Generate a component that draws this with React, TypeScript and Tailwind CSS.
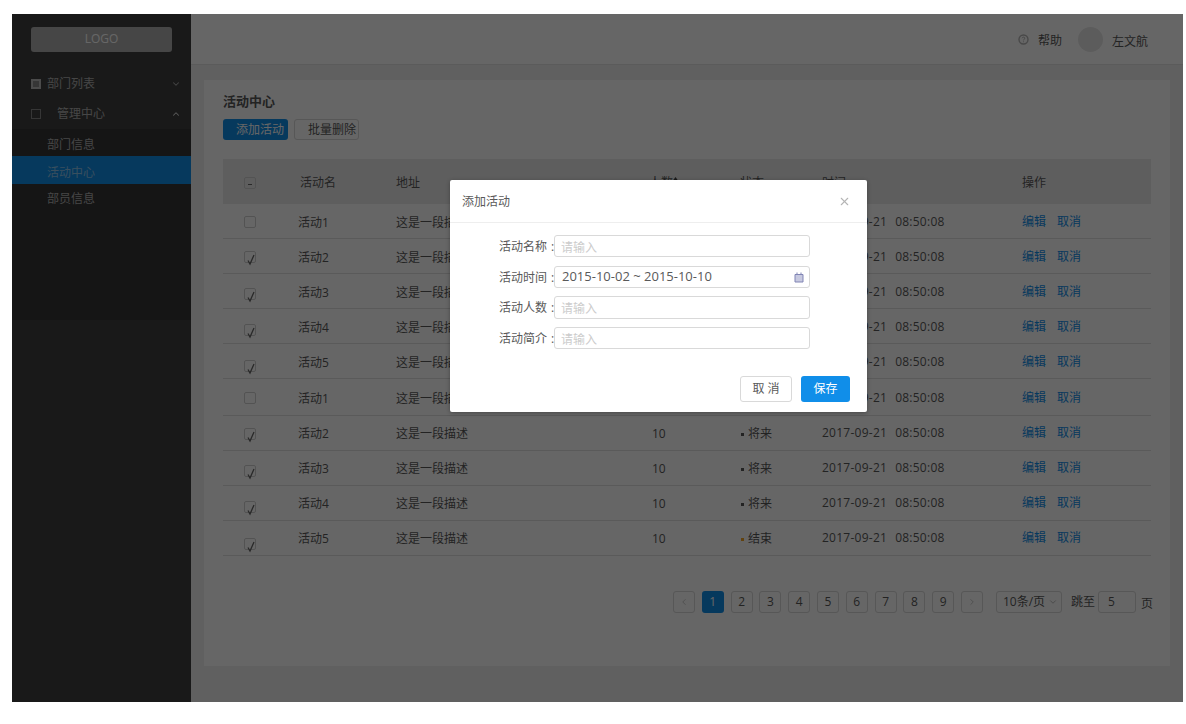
import React from "react";
import { ChevronDown, ChevronUp, ChevronLeft, ChevronRight, X } from "lucide-react";

const rows = [
  { n: "活动1", c: false, st: "将来", h: "h-[35px] pt-[4px]", o: "-translate-y-[1px]", d: "bg-[#595959]" },
  { n: "活动2", c: true, st: "将来", h: "h-[35px] pt-[4px]", o: "-translate-y-[1px]", d: "bg-[#595959]" },
  { n: "活动3", c: true, st: "将来", h: "h-[35px] pt-[4px]", o: "translate-y-[1px]", d: "bg-[#595959]" },
  { n: "活动4", c: true, st: "将来", h: "h-[35px] pt-[4px]", o: "translate-y-[2px]", d: "bg-[#595959]" },
  { n: "活动5", c: true, st: "结束", h: "h-[35px] pt-[4px]", o: "translate-y-[3px]", d: "bg-[#f5a623]" },
  { n: "活动1", c: false, st: "将来", h: "h-[37px] pt-[4px]", o: "-translate-y-[1px]", d: "bg-[#595959]" },
  { n: "活动2", c: true, st: "将来", h: "h-[35px] pt-[2px]", o: "translate-y-[0px]", d: "bg-[#595959]" },
  { n: "活动3", c: true, st: "将来", h: "h-[35px] pt-[2px]", o: "translate-y-[2px]", d: "bg-[#595959]" },
  { n: "活动4", c: true, st: "将来", h: "h-[35px] pt-[2px]", o: "translate-y-[3px]", d: "bg-[#595959]" },
  { n: "活动5", c: true, st: "结束", h: "h-[35px] pt-[2px]", o: "translate-y-[5px]", d: "bg-[#f5a623]" },
];

const gridCols = "grid grid-cols-[75px_98px_256px_88px_82px_200px_1fr] items-center";

function Box({ checked, dash, cls }: { checked?: boolean; dash?: boolean; cls?: string }) {
  return (
    <span className={`relative ml-[21px] block h-[12px] w-[12px] rounded-[2px] border border-[#cfcfcf] ${cls ?? ""}`}>
      {dash && <span className="absolute left-[3px] top-[6px] h-[1px] w-[4px] bg-[#666]" />}
      {checked && (
        <svg className="absolute left-[1px] top-[1px]" width="12" height="14" viewBox="0 0 12 14" fill="none">
          <path d="M2 7.5 L4 11 L8 2" stroke="#666" strokeWidth="1.3" />
        </svg>
      )}
    </span>
  );
}

function Field({ label, mt, h, children }: { label: string; mt: string; h: string; children: React.ReactNode }) {
  return (
    <div className={`flex items-center ${mt}`}>
      <span className="flex w-[104px] pl-[49px] pt-[1px] text-[12px] whitespace-nowrap text-[#595959]">
        {label}
        <span className="ml-[4px]">:</span>
      </span>
      <div className={`flex w-[256px] items-center justify-between rounded-[3px] border border-[#d9d9d9] pl-[6px] pr-[5px] ${h}`}>
        {children}
      </div>
    </div>
  );
}

const Ph = () => <span className="pt-[3px] text-[12px] text-[#cccccc]">请输入</span>;

export default function App() {
  return (
    <div className="h-[724px] w-full overflow-hidden bg-white pl-[12px] pt-[14px] text-[12px] text-[#595959] [font-family:'Open_Sans','Noto_Sans_CJK_SC',sans-serif]">
      <div className="relative flex h-[688px] w-[1171px] overflow-hidden">
        <aside className="flex w-[179px] shrink-0 flex-col bg-[#404040] text-[#b0b0b0]">
          <div className="mx-[19px] mt-[13px] flex h-[25px] items-center justify-center rounded-[3px] bg-[#b0b0b0] pb-[2px] text-[12px] text-white">LOGO</div>
          <div className="mt-[18px] flex h-[28px] items-center pl-[19px] pr-[10px]">
            <span className="h-[10px] w-[10px] border-2 border-[#bbb] bg-[#888]" />
            <span className="ml-[6px] flex-1">部门列表</span>
            <ChevronDown size={10} strokeWidth={2.5} className="text-[#aaa]" />
          </div>
          <div className="flex h-[31px] items-center pl-[19px] pr-[10px]">
            <span className="h-[10px] w-[10px] border border-[#888]" />
            <span className="ml-[16px] flex-1">管理中心</span>
            <ChevronUp size={10} strokeWidth={2.5} className="text-[#ddd]" />
          </div>
          <div className="h-[191px] bg-[#353535] pl-[35px]">
            <div className="flex h-[27px] items-center pt-[5px]">部门信息</div>
            <div className="-ml-[35px] flex h-[28px] items-center bg-[#108ee9] pl-[35px] pt-[5px] text-[#8fc5ec]">活动中心</div>
            <div className="flex h-[28px] items-center pt-[2px]">部员信息</div>
          </div>
        </aside>

        <div className="flex min-w-0 flex-1 flex-col bg-[#f0f0f0]">
          <header className="flex h-[51px] shrink-0 items-center justify-end border-b border-[#e4e4e4] bg-white pr-[35px]">
            <svg width="11" height="11" viewBox="0 0 11 11" fill="none" className="mr-[9px]">
              <circle cx="5.5" cy="5.5" r="4.5" stroke="#b5b5b5" strokeWidth="1.4" />
              <path d="M4.2 4.2 C4.2 2.8 6.8 2.8 6.8 4.2 C6.8 5.2 5.5 5.2 5.5 6.4 M5.5 7.4 V8.2" stroke="#b5b5b5" />
            </svg>
            <span className="mt-[3px]">帮助</span>
            <span className="ml-[16px] h-[25px] w-[25px] rounded-full bg-[#e6e6e6]" />
            <span className="ml-[9px] mt-[5px]">左文航</span>
          </header>

          <div className="flex-1 px-[13px] pb-[36px] pt-[15px]">
            <main className="h-[586px] bg-white px-[19px] pt-[13px]">
              <h1 className="pt-[1px] text-[13px] font-bold leading-[14px] text-[#595959]">活动中心</h1>
              <div className="mt-[11px] flex gap-[6px]">
                <button className="h-[21px] w-[65px] rounded-[3px] bg-[#108ee9] pl-[13px] text-left text-[12px] text-white">添加活动</button>
                <button className="h-[21px] w-[65px] rounded-[3px] border border-[#d9d9d9] pl-[13px] text-left text-[12px]">批量删除</button>
              </div>
              <div className={`${gridCols} mt-[19px] h-[45px] bg-[#ececec] pt-[2px]`}>
                <Box dash />
                <span className="pl-[2px]">活动名</span>
                <span>地址</span>
                <span className="-ml-[3px] flex items-center">
                  人数
                  <svg className="-mt-[4px]" width="5" height="8" viewBox="0 0 5 8"><path d="M2.5 0 L5 3.5 H0 Z" fill="#444" /><path d="M2.5 8 L5 4.5 H0 Z" fill="#aaa" /></svg>
                </span>
                <span>状态</span>
                <span>时间</span>
                <span>操作</span>
              </div>
              {rows.map((r, i) => (
                <div key={i} className={`${gridCols} ${r.h} border-b border-[#e0e0e0]`}>
                  <Box checked={r.c} cls={r.o} />
                  <span>{r.n}</span>
                  <span>这是一段描述</span>
                  <span>10</span>
                  <span className="flex items-center">
                    <span className={`ml-[1px] mr-[4px] h-[3px] w-[3px] ${r.d}`} />
                    {r.st}
                  </span>
                  <span className="-mt-[2px] flex tracking-[0.25px]">
                    <span>2017-09-21</span>
                    <span className="ml-[8px]">08:50:08</span>
                  </span>
                  <span className="-mt-[2px] flex gap-[11px] text-[#108ee9]">
                    <span>编辑</span>
                    <span>取消</span>
                  </span>
                </div>
              ))}
              <div className="ml-[450px] mt-[35px] flex items-center whitespace-nowrap">
                <div className="flex shrink-0 gap-[6.8px] text-center">
                  <span className="flex h-[22px] w-[22px] items-center justify-center rounded-[3px] border border-[#d9d9d9] text-[#c0c0c0]"><ChevronLeft size={10} /></span>
                  <span className="flex h-[22px] w-[22px] items-center justify-center rounded-[3px] bg-[#108ee9] text-white">1</span>
                  {[2, 3, 4, 5, 6, 7, 8, 9].map((n) => (
                    <span key={n} className="flex h-[22px] w-[22px] items-center justify-center rounded-[3px] border border-[#d9d9d9]">{n}</span>
                  ))}
                  <span className="flex h-[22px] w-[22px] items-center justify-center rounded-[3px] border border-[#d9d9d9] text-[#c0c0c0]"><ChevronRight size={10} /></span>
                </div>
                <span className="ml-[13px] flex h-[22px] w-[66px] shrink-0 items-center justify-between rounded-[3px] border border-[#d9d9d9] pl-[6px] pr-[3px]">
                  10条/页
                  <ChevronDown size={10} className="text-[#b0b0b0]" />
                </span>
                <span className="ml-[9px] shrink-0">跳至</span>
                <span className="ml-[3px] flex h-[22px] w-[38px] shrink-0 items-center rounded-[3px] border border-[#d9d9d9] pl-[9px]">5</span>
                <span className="ml-[5px] mt-[4px] shrink-0">页</span>
              </div>
            </main>
          </div>
        </div>

        <div className="absolute inset-0 bg-black/60" />

        <div className="absolute left-[438px] top-[166px] h-[232px] w-[417px] rounded-[2px] bg-white shadow-[0_1px_4px_rgba(0,0,0,0.3)]">
          <div className="flex h-[43px] items-center justify-between border-b border-[#eeeeee] pl-[12px] pr-[16px]">
            <span className="pt-[2px] text-[12px] text-[#595959]">添加活动</span>
            <X size={13} strokeWidth={2} className="text-[#b5b5b5]" />
          </div>
          <div className="flex flex-col">
            <Field label="活动名称" mt="mt-[12px]" h="h-[22px]"><Ph /></Field>
            <Field label="活动时间" mt="mt-[9px]" h="h-[22px]">
              <span className="pl-[1px] text-[13px] text-[#595959]">2015-10-02 ~ 2015-10-10</span>
              <svg width="10" height="11" viewBox="0 0 10 11" fill="none">
                <path d="M1 2.5 H9 V10 H1 Z" fill="#c7c9e0" stroke="#8185b5" />
                <path d="M3 0.5 V3 M7 0.5 V3" stroke="#8185b5" />
              </svg>
            </Field>
            <Field label="活动人数" mt="mt-[8px]" h="h-[23px]"><Ph /></Field>
            <Field label="活动简介" mt="mt-[8px]" h="h-[22px]"><Ph /></Field>
          </div>
          <div className="mt-[27px] flex justify-end gap-[9px] pr-[17px]">
            <button className="h-[26px] w-[52px] rounded-[3px] border border-[#d9d9d9] bg-white text-[12px] text-[#595959]">取 消</button>
            <button className="h-[26px] w-[49px] rounded-[3px] bg-[#108ee9] text-[12px] text-white">保存</button>
          </div>
        </div>
      </div>
    </div>
  );
}
